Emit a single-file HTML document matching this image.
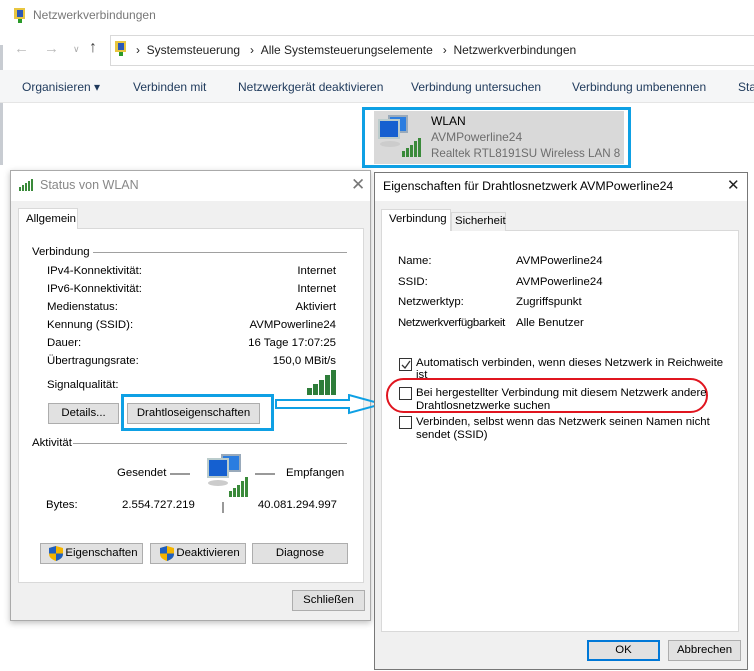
<!DOCTYPE html>
<html><head><meta charset="utf-8"><style>
*{margin:0;padding:0;box-sizing:border-box}
body{width:754px;height:671px;position:relative;overflow:hidden;background:#fff;font-family:"Liberation Sans",sans-serif;font-size:11.4px;color:#000}
.a{position:absolute;white-space:nowrap}
.btn{position:absolute;background:#e1e1e1;border:1px solid #adadad;text-align:center;line-height:19px}
.line{position:absolute;height:1px;background:#a0a0a0}
.cb{position:absolute;width:13px;height:13px;border:1px solid #333;background:#fff}
</style></head><body>
<!-- explorer -->
<div class="a" style="left:0;top:45px;width:3px;height:120px;background:#c8ccd2"></div>
<svg class="a" style="left:12px;top:7px" width="16" height="17"><rect x="2" y="1" width="11" height="11" fill="#e8c640"/><rect x="5" y="3" width="6" height="7" fill="#2b58b8"/><rect x="6" y="12" width="4" height="4" fill="#2a9a2a"/></svg>
<div class="a" style="left:33px;top:8px;color:#777;font-size:12px">Netzwerkverbindungen</div>
<div class="a" style="left:14px;top:40px;color:#bbb;font-size:15px">←</div>
<div class="a" style="left:44px;top:40px;color:#bbb;font-size:15px">→</div>
<div class="a" style="left:73px;top:44px;color:#aaa;font-size:9px">∨</div>
<div class="a" style="left:89px;top:39px;color:#444;font-size:16px">↑</div>
<div class="a" style="left:110px;top:35px;width:650px;height:31px;border:1px solid #d9d9d9"></div>
<svg class="a" style="left:113px;top:40px" width="16" height="17"><rect x="2" y="1" width="11" height="11" fill="#e8c640"/><rect x="5" y="3" width="6" height="7" fill="#2b58b8"/><rect x="6" y="12" width="4" height="4" fill="#2a9a2a"/></svg>
<div class="a" style="left:136px;top:43px;color:#222;font-size:12px">›&nbsp;&nbsp;Systemsteuerung&nbsp;&nbsp;&nbsp;›&nbsp;&nbsp;Alle Systemsteuerungselemente&nbsp;&nbsp;&nbsp;›&nbsp;&nbsp;Netzwerkverbindungen</div>
<div class="a" style="left:0;top:70px;width:754px;height:33px;background:#f5f6f7;border-bottom:1px solid #e5e5e5"></div>
<div class="a" style="left:22px;top:80px;color:#1e395b;font-size:12px">Organisieren ▾</div>
<div class="a" style="left:133px;top:80px;color:#1e395b;font-size:12px">Verbinden mit</div>
<div class="a" style="left:238px;top:80px;color:#1e395b;font-size:12px">Netzwerkgerät deaktivieren</div>
<div class="a" style="left:411px;top:80px;color:#1e395b;font-size:12px">Verbindung untersuchen</div>
<div class="a" style="left:572px;top:80px;color:#1e395b;font-size:12px">Verbindung umbenennen</div>
<div class="a" style="left:738px;top:80px;color:#1e395b;font-size:12px">Sta</div>
<div class="a" style="left:362px;top:107px;width:269px;height:61px;border:3px solid #0ea0e4"></div>
<div class="a" style="left:374px;top:111px;width:250px;height:53px;background:#d9d9d9;overflow:hidden"></div>
<svg class="a" style="left:376px;top:113px" width="48" height="46"><rect x="12" y="2" width="20" height="18" fill="#9ab" /><rect x="14" y="4" width="16" height="14" fill="#2b7de0"/><rect x="2" y="6" width="22" height="20" fill="#bcc"/><rect x="4" y="8" width="18" height="16" fill="#1560d0"/><ellipse cx="14" cy="31" rx="10" ry="3" fill="#ccc"/><rect x="26" y="38" width="3" height="6" fill="#3a8a3a"/><rect x="30" y="35" width="3" height="9" fill="#3a8a3a"/><rect x="34" y="32" width="3" height="12" fill="#3a8a3a"/><rect x="38" y="28" width="3" height="16" fill="#3a8a3a"/><rect x="42" y="25" width="3" height="19" fill="#3a8a3a"/></svg>
<div class="a" style="left:431px;top:114px;font-size:12px">WLAN</div>
<div class="a" style="left:431px;top:130px;color:#6d6d6d;font-size:12px">AVMPowerline24</div>
<div class="a" style="left:431px;top:147px;color:#6d6d6d;font-size:11.6px;width:190px;overflow:hidden">Realtek RTL8191SU Wireless LAN 8...</div>

<!-- status dialog -->
<div class="a" style="left:10px;top:170px;width:361px;height:451px;background:#f0f0f0;border:1px solid #aaa;box-shadow:0 2px 6px rgba(0,0,0,.25)"></div>
<div class="a" style="left:11px;top:171px;width:359px;height:30px;background:#fff"></div>
<svg class="a" style="left:19px;top:179px" width="18" height="12"><rect x="0" y="8" width="2" height="4" fill="#3a8a3a"/><rect x="3" y="6" width="2" height="6" fill="#3a8a3a"/><rect x="6" y="4" width="2" height="8" fill="#3a8a3a"/><rect x="9" y="2" width="2" height="10" fill="#3a8a3a"/><rect x="12" y="0" width="2" height="12" fill="#3a8a3a"/></svg>
<div class="a" style="left:40px;top:178px;color:#888;font-size:12.5px">Status von WLAN</div>
<div class="a" style="left:351px;top:175px;color:#777;font-size:17px">✕</div>
<div class="a" style="left:18px;top:228px;width:346px;height:355px;background:#fff;border:1px solid #d9d9d9"></div>
<div class="a" style="left:18px;top:208px;width:60px;height:21px;background:#fff;border:1px solid #d9d9d9;border-bottom:none;padding:4px 0 0 7px">Allgemein</div>
<div class="a" style="left:32px;top:246px">Verbindung</div><div class="line" style="left:93px;top:252px;width:254px"></div>
<div class="a" style="left:47px;top:265px">IPv4-Konnektivität:</div><div class="a" style="right:418px;top:265px">Internet</div>
<div class="a" style="left:47px;top:283px">IPv6-Konnektivität:</div><div class="a" style="right:418px;top:283px">Internet</div>
<div class="a" style="left:47px;top:301px">Medienstatus:</div><div class="a" style="right:418px;top:301px">Aktiviert</div>
<div class="a" style="left:47px;top:319px">Kennung (SSID):</div><div class="a" style="right:418px;top:319px">AVMPowerline24</div>
<div class="a" style="left:47px;top:337px">Dauer:</div><div class="a" style="right:418px;top:337px">16 Tage 17:07:25</div>
<div class="a" style="left:47px;top:355px">Übertragungsrate:</div><div class="a" style="right:418px;top:355px">150,0 MBit/s</div>
<div class="a" style="left:47px;top:379px">Signalqualität:</div>
<svg class="a" style="left:307px;top:370px" width="31" height="26"><rect x="0" y="18" width="5" height="7" fill="#2e7d3a"/><rect x="6" y="14" width="5" height="11" fill="#2e7d3a"/><rect x="12" y="10" width="5" height="15" fill="#2e7d3a"/><rect x="18" y="5" width="5" height="20" fill="#2e7d3a"/><rect x="24" y="0" width="5" height="25" fill="#2e7d3a"/></svg>
<div class="btn" style="left:48px;top:403px;width:71px;height:21px">Details...</div>
<div class="a" style="left:121px;top:394px;width:153px;height:37px;border:3px solid #0ea0e4"></div>
<div class="btn" style="left:127px;top:403px;width:133px;height:21px">Drahtloseigenschaften</div>
<svg class="a" style="left:274px;top:394px" width="112" height="22"><path d="M2 6 H75 V1 L108 10 L75 19 V14 H2 Z" fill="none" stroke="#0ea0e4" stroke-width="2"/></svg>
<div class="a" style="left:32px;top:437px">Aktivität</div><div class="line" style="left:73px;top:443px;width:274px"></div>
<div class="a" style="left:117px;top:467px">Gesendet</div>
<div class="a" style="left:170px;top:473px;width:20px;height:2px;background:#999"></div>
<div class="a" style="left:255px;top:473px;width:20px;height:2px;background:#999"></div>
<div class="a" style="left:286px;top:467px">Empfangen</div>
<svg class="a" style="left:203px;top:453px" width="48" height="45"><rect x="18" y="1" width="20" height="18" fill="#9ab"/><rect x="20" y="3" width="16" height="14" fill="#2b7de0"/><rect x="4" y="5" width="22" height="20" fill="#bcc"/><rect x="6" y="7" width="18" height="16" fill="#1560d0"/><ellipse cx="15" cy="30" rx="10" ry="3" fill="#ccc"/><rect x="26" y="38" width="3" height="6" fill="#3a8a3a"/><rect x="30" y="35" width="3" height="9" fill="#3a8a3a"/><rect x="34" y="32" width="3" height="12" fill="#3a8a3a"/><rect x="38" y="28" width="3" height="16" fill="#3a8a3a"/><rect x="42" y="24" width="3" height="20" fill="#3a8a3a"/></svg>
<div class="a" style="left:46px;top:499px">Bytes:</div>
<div class="a" style="left:122px;top:499px">2.554.727.219</div>
<div class="a" style="left:222px;top:502px;width:2px;height:11px;background:#999"></div>
<div class="a" style="right:417px;top:499px">40.081.294.997</div>
<svg width="0" height="0" style="position:absolute"><defs><g id="sh"><path d="M7 0 L14 2 V8 C14 12 10 14 7 15 C4 14 0 12 0 8 V2 Z" fill="#f4b400"/><path d="M7 0 V7.5 H0 V2 Z" fill="#1f5fbf"/><path d="M7 7.5 H14 V8 C14 12 10 14 7 15 Z" fill="#1f5fbf"/></g></defs></svg>
<div class="btn" style="left:40px;top:543px;width:103px;height:21px;padding-left:20px">Eigenschaften</div>
<svg class="a" style="left:49px;top:546px" width="14" height="15"><use href="#sh"/></svg>
<div class="btn" style="left:150px;top:543px;width:96px;height:21px;padding-left:20px">Deaktivieren</div>
<svg class="a" style="left:160px;top:546px" width="14" height="15"><use href="#sh"/></svg>
<div class="btn" style="left:252px;top:543px;width:96px;height:21px">Diagnose</div>
<div class="btn" style="left:292px;top:590px;width:73px;height:21px">Schließen</div>

<!-- properties dialog -->
<div class="a" style="left:374px;top:172px;width:374px;height:498px;background:#f0f0f0;border:1px solid #777"></div>
<div class="a" style="left:375px;top:173px;width:372px;height:28px;background:#fff"></div>
<div class="a" style="left:383px;top:179px;font-size:12.3px">Eigenschaften für Drahtlosnetzwerk AVMPowerline24</div>
<div class="a" style="left:727px;top:176px;color:#222;font-size:15px">✕</div>
<div class="a" style="left:381px;top:230px;width:358px;height:402px;background:#fff;border:1px solid #d9d9d9"></div>
<div class="a" style="left:381px;top:209px;width:70px;height:22px;background:#fff;border:1px solid #d9d9d9;border-bottom:none;padding:3px 0 0 7px">Verbindung</div>
<div class="a" style="left:451px;top:212px;width:55px;height:19px;background:#f0f0f0;border:1px solid #d9d9d9;border-bottom:none;padding:2px 0 0 3px">Sicherheit</div>
<div class="a" style="left:398px;top:255px">Name:</div><div class="a" style="left:516px;top:255px">AVMPowerline24</div>
<div class="a" style="left:398px;top:276px">SSID:</div><div class="a" style="left:516px;top:276px">AVMPowerline24</div>
<div class="a" style="left:398px;top:296px">Netzwerktyp:</div><div class="a" style="left:516px;top:296px">Zugriffspunkt</div>
<div class="a" style="left:398px;top:317px;letter-spacing:-0.3px">Netzwerkverfügbarkeit</div><div class="a" style="left:516px;top:317px">Alle Benutzer</div>
<div class="cb" style="left:399px;top:358px"></div>
<svg class="a" style="left:400px;top:359px" width="12" height="12"><path d="M2 6 L5 9 L10 2" fill="none" stroke="#333" stroke-width="1.3"/></svg>
<div class="a" style="left:416px;top:357px;line-height:12px">Automatisch verbinden, wenn dieses Netzwerk in Reichweite<br>ist</div>
<div class="a" style="left:386px;top:378px;width:322px;height:35px;border:2px solid #e0151f;border-radius:18px"></div>
<div class="cb" style="left:399px;top:387px"></div>
<div class="a" style="left:416px;top:387px;line-height:12.5px">Bei hergestellter Verbindung mit diesem Netzwerk andere<br>Drahtlosnetzwerke suchen</div>
<div class="cb" style="left:399px;top:416px"></div>
<div class="a" style="left:416px;top:416px;line-height:12.5px">Verbinden, selbst wenn das Netzwerk seinen Namen nicht<br>sendet (SSID)</div>
<div class="btn" style="left:587px;top:640px;width:73px;height:21px;border:2px solid #0078d7;line-height:17px">OK</div>
<div class="btn" style="left:668px;top:640px;width:73px;height:21px">Abbrechen</div>
</body></html>
